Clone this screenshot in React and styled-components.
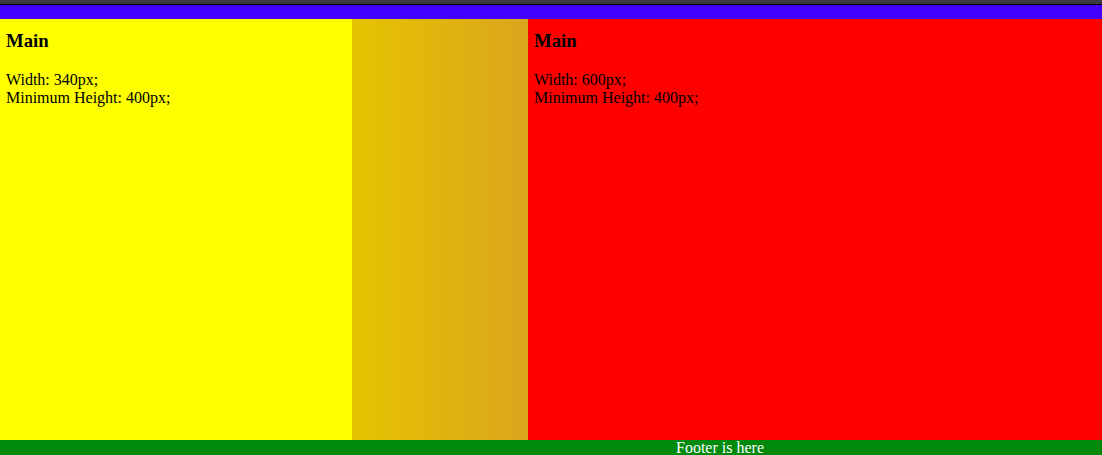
import React from 'react';
import styled, { createGlobalStyle } from 'styled-components';

const Global = createGlobalStyle`
  body {
    margin: 0;
    overflow: hidden;
    font-family: "Liberation Serif", "Times New Roman", serif;
    font-size: 16px;
  }
`;

const Page = styled.div`
  width: 100%;
  overflow: hidden;
`;

const Header = styled.header`
  height: 15px;
  background: #4400ff;
  border-top: 4px solid #3a3a3f;
  box-shadow: inset 0 1px 0 #000;
`;

const Body = styled.div`
  display: flex;
  min-height: 421px;
`;

const Main = styled.section`
  box-sizing: border-box;
  flex-shrink: 0;
  width: ${props => props.$width + 12}px;
  padding: 11px 6px 0;
  background: ${props => props.$bg};
`;

const Side = styled.aside`
  flex-shrink: 0;
  width: 176px;
  background: linear-gradient(to right, #e6c300, #daa51d);
`;

const Title = styled.h3`
  margin: 0 0 18.72px;
  font-size: 18.72px;
  font-weight: bold;
`;

const Text = styled.p`
  margin: 0;
`;

const Footer = styled.footer`
  height: 15px;
  padding-left: 338px;
  background: #008a0c;
  color: #fff;
  text-align: center;
  font-size: 16px;
  line-height: 15px;
`;

export default () => {
  return (
    <Page>
      <Global />
      <Header />
      <Body>
        <Main $width={340} $bg="#ffff00">
          <Title>Main</Title>
          <Text>Width: 340px;<br />Minimum Height: 400px;</Text>
        </Main>
        <Side />
        <Main $width={600} $bg="#ff0000">
          <Title>Main</Title>
          <Text>Width: 600px;<br />Minimum Height: 400px;</Text>
        </Main>
      </Body>
      <Footer>Footer is here</Footer>
    </Page>
  );
};
